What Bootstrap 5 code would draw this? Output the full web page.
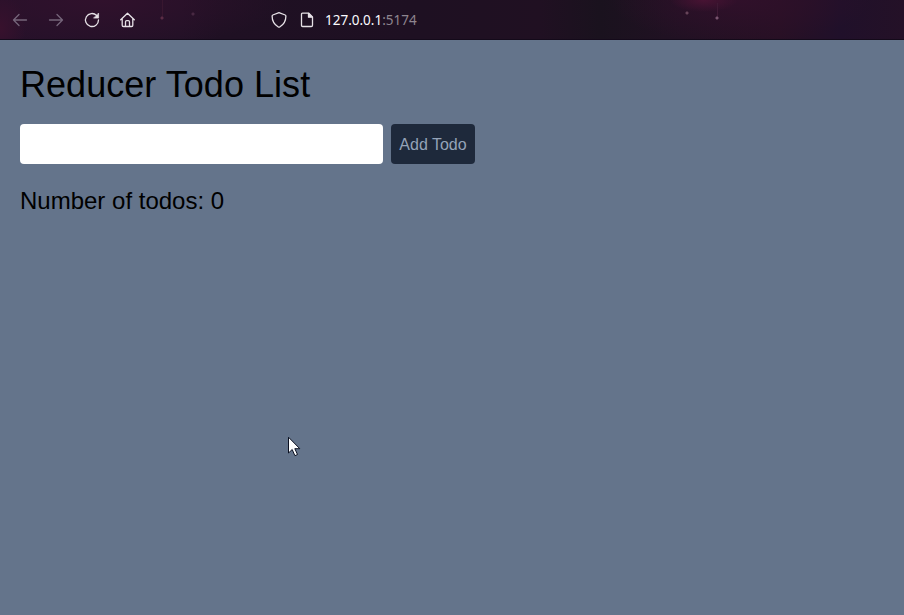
<!DOCTYPE html>
<html lang="en">
<head>
<meta charset="utf-8">
<meta name="viewport" content="width=device-width, initial-scale=1">
<title>Reducer Todo List</title>
<link href="https://cdn.jsdelivr.net/npm/bootstrap@5.3.0/dist/css/bootstrap.min.css" rel="stylesheet">
<style>
body { background: #64748b; color: #000; font-family: "Liberation Sans", Arial, sans-serif; height: 100vh; }
.toolbar {
  height: 40px; border-bottom: 1px solid #140a1a; color: #e6e1e6; padding-left: 12px;
  background:
    radial-gradient(circle at 162px 18px, #5b2c45 0 1px, transparent 2px),
    radial-gradient(circle at 193px 14px, #482842 0 1px, transparent 2px),
    radial-gradient(circle at 687px 13px, #674459 0 1px, transparent 2px),
    radial-gradient(circle at 717px 18px, #7a5670 0 1px, transparent 2px),
    linear-gradient(#3f1a35, #3f1a35) 717px 3px / 1px 15px no-repeat,
    linear-gradient(#38172f, #38172f) 162px 0 / 1px 18px no-repeat,
    radial-gradient(ellipse 34px 12px at 704px 0, #481333, transparent),
    radial-gradient(ellipse 130px 44px at 740px 0, #30102a, transparent),
    radial-gradient(ellipse 26px 34px at 0 28px, #38112d, transparent),
    radial-gradient(ellipse 190px 48px at 100px 0, #30112c, transparent),
    linear-gradient(90deg, #26112a 0, #221126 180px, #1f1023 220px, #1e1022 420px, #201022 540px, #1a121e 600px, #211123 680px, #271024 780px, #20102a 840px, #241127 904px);
}
.toolbar svg { display: block; flex: none; fill: none; stroke: currentColor; stroke-width: 1.3; stroke-linecap: round; stroke-linejoin: round; }
.tools { gap: 20px; width: 259px; }
.dimmed { color: #75657a; }
.address { font: 13.5px/20px "Noto Sans", sans-serif; color: #fbfbfe; }
.address-gap { gap: 12px; }
.address-gap .address { margin-left: -2px; }
.port { color: #8e858f; }
.page { padding: 20px; }
.title { font-size: 36px; line-height: 40px; letter-spacing: .04px; margin: 5px 0 19px; font-weight: 400; }
.todo-input { width: 363px; height: 40px; border: 0; border-radius: 4px; background: #fff; }
.add-btn { width: 84px; height: 40px; padding: 2px 7px 0; border: 0; border-radius: 4px; background: #1e293b; color: #94a3b8; font-size: 16px; line-height: 24px; }
.total { font-size: 24px; line-height: 32px; margin: 21px 0 0; }
.pointer { left: 288px; top: 436px; }
</style>
</head>
<body class="position-relative overflow-hidden">
<header class="toolbar d-flex align-items-center">
  <nav class="tools d-flex align-items-center flex-shrink-0" aria-label="Browser">
    <svg class="dimmed" width="16" height="16"><path d="M14.500 8H1.500M7 2.500 1.500 8 7 13.500"/></svg>
    <svg class="dimmed" width="16" height="16"><path d="M1.500 8h13M9 2.500 14.500 8 9 13.500"/></svg>
    <svg width="16" height="16"><path d="M12.600 3.400A6.500 6.500 0 1 0 14.500 8"/><path d="M14.600 1.400v4.700H9.900z" fill="currentColor" stroke-width=".7"/></svg>
    <svg width="16" height="16"><path d="M.7 7.800 7.500 1.200l6.800 6.600M2.200 6.800v6.500q0 1.200 1.200 1.200h8.200q1.200 0 1.200-1.200V6.800M5.500 14.300v-4.500q0-1.200 1.200-1.200h1.600q1.200 0 1.200 1.200v4.500"/></svg>
  </nav>
  <div class="address-gap d-flex align-items-center">
    <svg width="16" height="16"><path d="M8 .7 14.200 3q.7.300.7 1c0 4.500-2 8.500-6.200 11q-.7.400-1.400 0C3.100 12.500 1.100 8.500 1.100 4q0-.7.700-1z"/></svg>
    <svg width="16" height="16"><path d="M3.500 1.200h6.300l3.700 3.700v8.400q0 1.200-1.200 1.200H3.700q-1.200 0-1.200-1.200V2.400q0-1.200 1-1.200z"/><path d="M9.500 1.500v3.700h3.700z" fill="currentColor"/></svg>
    <div class="address">127.0.0.1<span class="port">:5174</span></div>
  </div>
</header>
<main class="page">
  <h1 class="title">Reducer Todo List</h1>
  <form class="d-flex gap-2">
    <input class="todo-input px-2" type="text" aria-label="Todo">
    <button class="add-btn text-nowrap" type="button">Add Todo</button>
  </form>
  <p class="total">Number of todos: 0</p>
</main>
<svg class="pointer position-absolute" width="14" height="22" viewBox="0 0 14 22"><path d="M.5 1.200V17l3.700-3.500 2.700 6.200 2.600-1.200-2.700-5.800h5z" fill="#fff" stroke="#0b1020"/></svg>
<script src="https://cdn.jsdelivr.net/npm/bootstrap@5.3.0/dist/js/bootstrap.bundle.min.js"></script>
</body>
</html>
